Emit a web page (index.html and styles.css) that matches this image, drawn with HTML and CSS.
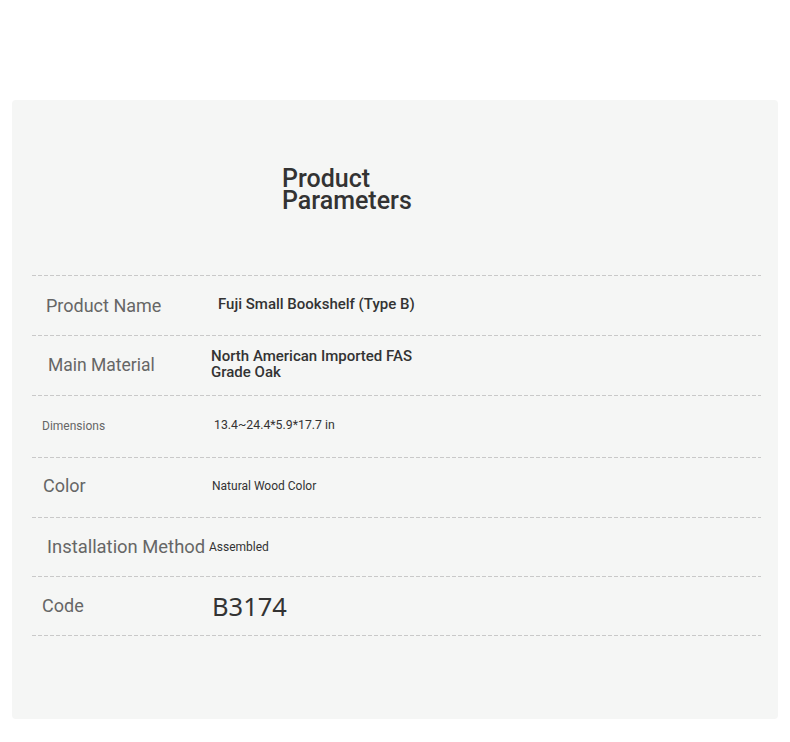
FILE: index.html
```html
<!DOCTYPE html>
<html lang="en">
<head>
<meta charset="utf-8">
<title>Product Parameters</title>
<link rel="stylesheet" href="styles.css">
</head>
<body>
<section class="panel">
  <h2 class="title"><span class="title-line">Product</span><span class="title-line">Parameters</span></h2>
  <div class="table">
    <div class="row r1">
      <div class="label">Product Name</div>
      <div class="value">Fuji Small Bookshelf (Type B)</div>
    </div>
    <div class="row r2">
      <div class="label">Main Material</div>
      <div class="value">North American Imported FAS<br>Grade Oak</div>
    </div>
    <div class="row r3">
      <div class="label">Dimensions</div>
      <div class="value">13.4~24.4*5.9*17.7 in</div>
    </div>
    <div class="row r4">
      <div class="label">Color</div>
      <div class="value">Natural Wood Color</div>
    </div>
    <div class="row r5">
      <div class="label">Installation Method</div>
      <div class="value">Assembled</div>
    </div>
    <div class="row r6">
      <div class="label">Code</div>
      <div class="value">B3174</div>
    </div>
  </div>
</section>
</body>
</html>
```
FILE: styles.css
```css
html, body {
  margin: 0;
  padding: 0;
  background: #ffffff;
}
body {
  font-family: Roboto, "Liberation Sans", sans-serif;
  padding-top: 100px;
}
.panel {
  margin-left: 12px;
  width: 766px;
  height: 619px;
  box-sizing: border-box;
  background: #f5f6f5;
  border-radius: 4px;
  padding: 68px 17px 0 20px;
}
.title {
  margin: 0 0 63px 250px;
  font-size: 25px;
  line-height: 22px;
  font-weight: 500;
  color: #333333;
}
.title-line {
  display: block;
  height: 22px;
}
.table {
  display: flex;
  flex-direction: column;
}
.row {
  display: flex;
  align-items: center;
  height: 60px;
  box-sizing: border-box;
  background-image: repeating-linear-gradient(to right, #c9c9c9 0 4px, transparent 4px 6px);
  background-size: 100% 1px;
  background-repeat: no-repeat;
  background-position: top left;
}
.table::after {
  content: "";
  display: block;
  height: 1px;
  background-image: repeating-linear-gradient(to right, #c9c9c9 0 4px, transparent 4px 6px);
}
.label {
  flex: 0 0 177px;
  box-sizing: border-box;
  color: #666666;
  font-size: 18px;
  white-space: nowrap;
}
.value {
  color: #333333;
  font-size: 15px;
  font-weight: 500;
}
.r1 .label { padding-left: 14px; }
.r1 .value { margin-left: 9px; margin-top: -2px; }
.r2 .label { padding-left: 16px; font-size: 17.5px; }
.r2 .value { margin-left: 2px; line-height: 16px; margin-top: -2px; }
.r3 { height: 62px; }
.r3 .label { padding-left: 10px; font-size: 12px; }
.r3 .value { margin-left: 5px; font-size: 12.3px; font-weight: 400; margin-top: -2px; }
.r4 .label { padding-left: 11px; margin-top: -3px; }
.r4 .value { margin-left: 3px; font-size: 12px; font-weight: 400; margin-top: -2px; }
.r5 { height: 59px; }
.r5 .label { padding-left: 15px; font-size: 18.4px; margin-top: -1px; }
.r5 .value { margin-left: 0; font-size: 12px; font-weight: 400; margin-top: 1px; }
.r6 { height: 59px; }
.r6 .label { padding-left: 10px; }
.r6 .value { margin-left: 3px; font-family: "Noto Sans", "Open Sans", sans-serif; font-size: 25.5px; font-weight: 400; }
```
